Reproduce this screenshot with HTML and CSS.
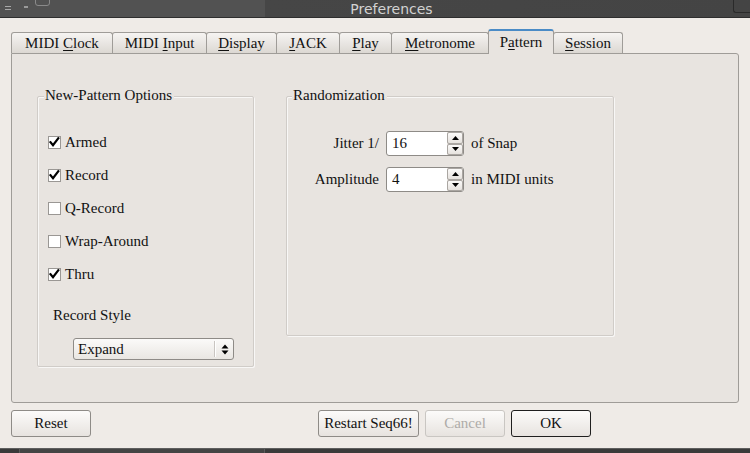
FILE: index.html
```html
<!DOCTYPE html>
<html>
<head>
<meta charset="utf-8">
<title>Preferences</title>
<link rel="stylesheet" href="styles.css">
</head>
<body>
<div class="window">
  <div class="titlebar">
    <div class="tb-left">
      <span class="tb-menu"></span>
      <span class="tb-dot"></span>
      <span class="tb-handle"></span>
    </div>
    <div class="tb-title">Preferences</div>
    <div class="tb-corner"></div>
  </div>

  <div class="tabs">
    <div class="tab t-clock">MIDI <u>C</u>lock</div>
    <div class="tab t-input">MIDI <u>I</u>nput</div>
    <div class="tab t-display"><u>D</u>isplay</div>
    <div class="tab t-jack"><u>J</u>ACK</div>
    <div class="tab t-play"><u>P</u>lay</div>
    <div class="tab t-metro"><u>M</u>etronome</div>
    <div class="tab t-pattern active">P<u>a</u>ttern</div>
    <div class="tab t-session"><u>S</u>ession</div>
  </div>

  <div class="pane">
    <div class="group group-np">
      <div class="group-title">New-Pattern Options</div>
      <div class="checks">
        <div class="check"><span class="box"><svg viewBox="0 0 13 13" width="13" height="13"><path d="M2.5 6.2 L5 9.2 L10.3 2.3" /></svg></span><span class="check-label">Armed</span></div>
        <div class="check"><span class="box"><svg viewBox="0 0 13 13" width="13" height="13"><path d="M2.5 6.2 L5 9.2 L10.3 2.3" /></svg></span><span class="check-label">Record</span></div>
        <div class="check"><span class="box"></span><span class="check-label">Q-Record</span></div>
        <div class="check"><span class="box"></span><span class="check-label">Wrap-Around</span></div>
        <div class="check"><span class="box"><svg viewBox="0 0 13 13" width="13" height="13"><path d="M2.5 6.2 L5 9.2 L10.3 2.3" /></svg></span><span class="check-label">Thru</span></div>
      </div>
      <div class="rs-label">Record Style</div>
      <div class="combo">
        <span class="combo-text">Expand</span>
        <span class="combo-sep"></span>
        <span class="combo-arrows"><svg viewBox="0 0 8 11" width="8" height="11"><path d="M0.5 4.5 L4 0.5 L7.5 4.5 Z M0.5 6.5 L7.5 6.5 L4 10.5 Z" /></svg></span>
      </div>
    </div>

    <div class="group group-rand">
      <div class="group-title">Randomization</div>
      <div class="spin-grid">
        <div class="spin-label">Jitter 1/</div>
        <div class="spin">
          <span class="spin-text">16</span>
          <span class="spin-btns">
            <span class="sb"><svg viewBox="0 0 7 4" width="7" height="4"><path d="M0 4 L3.5 0 L7 4 Z"/></svg></span>
            <span class="sb"><svg viewBox="0 0 7 4" width="7" height="4"><path d="M0 0 L7 0 L3.5 4 Z"/></svg></span>
          </span>
        </div>
        <div class="spin-suffix">of Snap</div>

        <div class="spin-label">Amplitude</div>
        <div class="spin">
          <span class="spin-text">4</span>
          <span class="spin-btns">
            <span class="sb"><svg viewBox="0 0 7 4" width="7" height="4"><path d="M0 4 L3.5 0 L7 4 Z"/></svg></span>
            <span class="sb"><svg viewBox="0 0 7 4" width="7" height="4"><path d="M0 0 L7 0 L3.5 4 Z"/></svg></span>
          </span>
        </div>
        <div class="spin-suffix">in MIDI units</div>
      </div>
    </div>
  </div>

  <div class="buttons">
    <div class="btn">Reset</div>
    <div class="btn btn-restart">Restart Seq66!</div>
    <div class="btn btn-disabled">Cancel</div>
    <div class="btn btn-default">OK</div>
  </div>

  <div class="taskbar">
    <span class="tk-seg tk-a"></span>
    <span class="tk-seg tk-b"></span>
    <span class="tk-seg tk-c"></span>
  </div>
</div>
</body>
</html>
```

FILE: styles.css
```css
* {
  box-sizing: border-box;
  margin: 0;
  padding: 0;
}

html, body {
  width: 750px;
  height: 453px;
  overflow: hidden;
}

body {
  background: #efebe7;
  font-family: "Liberation Serif", "Times New Roman", serif;
  font-size: 15px;
  color: #111;
}

.window {
  display: flex;
  flex-direction: column;
  height: 453px;
}

/* ---------- title bar ---------- */
.titlebar {
  height: 18px;
  display: flex;
  background: linear-gradient(90deg, #525252 0, #525252 265px, #464646 265px, #444 100%);
  border-bottom: 1px solid #2e2e2e;
  position: relative;
}

.tb-left {
  width: 33px;
  position: relative;
}

.tb-menu {
  position: absolute;
  left: 5px;
  top: 6px;
  width: 6px;
  height: 4px;
  border-top: 1px solid #a8a8a8;
  border-bottom: 1px solid #a8a8a8;
}

.tb-dot {
  position: absolute;
  left: 24px;
  top: 6px;
  width: 4px;
  height: 2px;
  background: #9a9a9a;
}

.tb-handle {
  position: absolute;
  left: 35px;
  top: -2px;
  width: 15px;
  height: 8px;
  border: 1px solid #8a8a8a;
  border-radius: 0 0 3px 3px;
}

.tb-title {
  flex: 1;
  text-align: center;
  font-family: "DejaVu Sans", sans-serif;
  font-size: 14px;
  line-height: 18px;
  color: #d2d2d2;
}

.tb-corner {
  position: absolute;
  right: 0;
  top: -1px;
  width: 17px;
  height: 14px;
  border: 1px solid #2a2a2a;
  border-right: none;
  border-radius: 0 0 0 3px;
}

/* ---------- tabs ---------- */
.tabs {
  display: flex;
  align-items: flex-end;
  height: 24px;
  margin: 11px 0 0 11px;
  position: relative;
  z-index: 1;
}

.tab {
  height: 21px;
  margin-right: -1px;
  border: 1px solid #9f9c98;
  border-bottom: none;
  border-radius: 3px 3px 0 0;
  background: linear-gradient(#f6f4f2, #dcd8d3);
  line-height: 20px;
  text-align: center;
  white-space: nowrap;
  flex: none;
}

.t-clock { width: 102px; }
.t-input { width: 95px; }
.t-display { width: 71px; }
.t-jack { width: 64px; }
.t-play { width: 53px; }
.t-metro { width: 98px; }
.t-pattern { width: 66px; }
.t-session { width: 70px; }

.tab u {
  text-underline-offset: 2px;
}

.tab.active {
  height: 25px;
  margin-bottom: -1px;
  border-top: 2px solid #4a8bc6;
  background: #e8e4e0;
  line-height: 22px;
  position: relative;
  z-index: 2;
}

/* ---------- pane ---------- */
.pane {
  height: 350px;
  margin: 0 11px;
  border: 1px solid #9f9c98;
  border-radius: 0 3px 3px 3px;
  background: #e8e4e0;
  display: flex;
  align-items: flex-start;
  gap: 32px;
  padding: 42px 0 0 25px;
}

.group {
  position: relative;
  border: 1px solid #d0ccc8;
  box-shadow: inset 1px 1px 0 #f8f7f6, 1px 1px 0 #f8f7f6;
  border-radius: 2px;
}

.group-title {
  position: absolute;
  top: -10px;
  left: 6px;
  padding: 0 2px 0 1px;
  line-height: 17px;
  background: #e8e4e0;
  white-space: nowrap;
}

.group-np {
  width: 217px;
  height: 271px;
}

.group-rand {
  width: 328px;
  height: 240px;
}

.group-rand .group-title {
  left: 5px;
}

/* checkboxes */
.checks {
  padding: 29px 0 0 10px;
  display: flex;
  flex-direction: column;
}

.check {
  height: 33px;
  display: flex;
  align-items: center;
}

.box {
  width: 13px;
  height: 13px;
  border: 1px solid #9a9794;
  background: #fff;
  position: relative;
  flex: none;
}

.box svg {
  position: absolute;
  left: -1px;
  top: -1px;
}

.box path {
  fill: none;
  stroke: #000;
  stroke-width: 2.2;
  stroke-linecap: square;
}

.check-label {
  margin-left: 4px;
}

.rs-label {
  margin-top: 16px;
  padding-left: 15px;
  line-height: 17px;
}

/* combo */
.combo {
  margin: 14px 0 0 35px;
  width: 161px;
  height: 22px;
  border: 1px solid #8e8b87;
  border-radius: 3px;
  background: linear-gradient(#fbfaf9, #e9e6e2);
  display: flex;
  align-items: center;
}

.combo-text {
  width: 140px;
  padding-left: 4px;
}

.combo-sep {
  width: 2px;
  height: 16px;
  border-left: 1px solid #c9c5c1;
  border-right: 1px solid #ffffff;
}

.combo-arrows {
  flex: 1;
  display: flex;
  justify-content: center;
  padding-left: 1px;
}

.combo-arrows path {
  fill: #000;
}

/* spin boxes */
.spin-grid {
  display: grid;
  grid-template-columns: 92px 78px auto;
  grid-auto-rows: 25px;
  column-gap: 7px;
  row-gap: 11px;
  padding-top: 34px;
  align-items: center;
}

.spin-label {
  text-align: right;
}

.spin {
  height: 25px;
  border: 1px solid #8e8b87;
  border-radius: 3px;
  background: #fff;
  display: flex;
}

.spin-text {
  flex: 1;
  padding-left: 5px;
  line-height: 23px;
}

.spin-btns {
  width: 16px;
  display: flex;
  flex-direction: column;
  background: #e8e4e0;
  border-radius: 0 2px 2px 0;
}

.sb {
  flex: 1;
  display: flex;
  align-items: center;
  justify-content: center;
  border: 1px solid #aaa6a2;
  border-radius: 2px;
  background: linear-gradient(#fbfaf9, #e6e2de);
}

.sb path {
  fill: #000;
}

/* ---------- dialog buttons ---------- */
.buttons {
  display: flex;
  gap: 6px;
  margin: 7px 0 0 11px;
  height: 27px;
}

.btn {
  width: 80px;
  height: 27px;
  border: 1px solid #8e8b87;
  border-radius: 3px;
  background: linear-gradient(#fcfbfa, #e7e3df);
  display: flex;
  align-items: center;
  justify-content: center;
  white-space: nowrap;
}

.btn-restart {
  width: 101px;
  margin-left: 221px;
}

.btn-disabled {
  color: #aeaba8;
  border-color: #c9c6c2;
}

.btn-default {
  border-color: #1f1f1f;
}

/* ---------- bottom strip ---------- */
.taskbar {
  margin-top: 11px;
  height: 5px;
  display: flex;
  background: #3a3a3a;
  border-top: 1px solid #5e5e5e;
}

.tk-seg {
  height: 100%;
}

.tk-a {
  width: 20px;
  border-right: 1px solid #5a5a5a;
}

.tk-b {
  width: 245px;
  background: #444;
  border-right: 1px solid #5a5a5a;
}

.tk-c {
  flex: 1;
}
```
